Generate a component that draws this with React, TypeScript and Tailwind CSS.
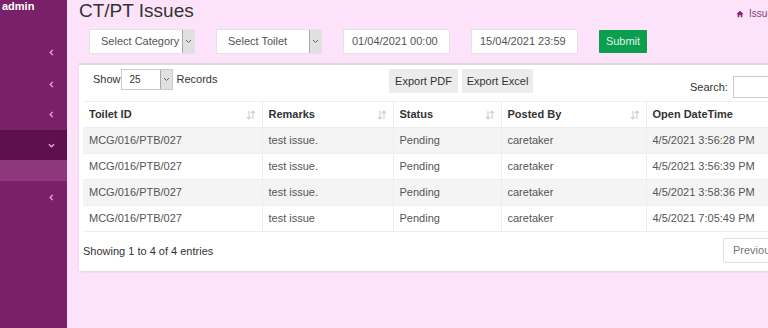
import React from "react";

const F = { fontFamily: '"Liberation Sans", Arial, sans-serif' };

function Chevron({ down = false }: { down?: boolean }) {
  return (
    <svg width="7" height="7" viewBox="0 0 8 8" className="text-[#e8a0dc]">
      {down ? (
        <path d="M1 2.5 L4 5.5 L7 2.5" stroke="currentColor" strokeWidth="1.6" fill="none" />
      ) : (
        <path d="M5.5 1 L2.5 4 L5.5 7" stroke="currentColor" strokeWidth="1.6" fill="none" />
      )}
    </svg>
  );
}

function SortIcon() {
  return (
    <svg width="10" height="10" viewBox="0 0 10 10" className="text-[#d0d0d0]">
      <path d="M3 1 V9 M1 7 L3 9 L5 7" stroke="currentColor" strokeWidth="1.2" fill="none" />
      <path d="M7 9 V1 M5 3 L7 1 L9 3" stroke="currentColor" strokeWidth="1.2" fill="none" />
    </svg>
  );
}

function SelectBox({ label, w }: { label: string; w: string }) {
  return (
    <div className={`flex h-[25px] ${w} bg-white border border-[#e3e3e3]`}>
      <div className="flex-1 flex items-center pl-[11px] text-[11px] text-[#555] whitespace-nowrap">{label}</div>
      <div className="w-[12px] bg-[#e0e0e0] border-l border-[#aaa] flex items-center justify-center">
        <svg width="7" height="5" viewBox="0 0 7 5"><path d="M1 1 L3.5 3.5 L6 1" stroke="#666" strokeWidth="1" fill="none" /></svg>
      </div>
    </div>
  );
}

const rows = [
  ["MCG/016/PTB/027", "test issue.", "Pending", "caretaker", "4/5/2021 3:56:28 PM"],
  ["MCG/016/PTB/027", "test issue.", "Pending", "caretaker", "4/5/2021 3:56:39 PM"],
  ["MCG/016/PTB/027", "test issue.", "Pending", "caretaker", "4/5/2021 3:58:36 PM"],
  ["MCG/016/PTB/027", "test issue", "Pending", "caretaker", "4/5/2021 7:05:49 PM"],
];

const cols = ["w-[179px]", "w-[131px]", "w-[108px]", "w-[145px]", "w-[140px]"];
const heads = ["Toilet ID", "Remarks", "Status", "Posted By", "Open DateTime"];

export default function App() {
  return (
    <div style={F} className="flex w-[768px] h-[328px] overflow-hidden bg-[#fce3f9]">
      <aside className="w-[67px] shrink-0 bg-[#7a2068] flex flex-col">
        <div className="h-[14px] pl-[2px] text-white font-bold text-[11px] leading-[12px]">admin</div>
        <div className="h-[30px]" />
        <div className="h-[16px] flex items-center justify-end pr-[12px]"><Chevron /></div>
        <div className="h-[16px]" />
        <div className="h-[16px] flex items-center justify-end pr-[12px]"><Chevron /></div>
        <div className="h-[14px]" />
        <div className="h-[16px] flex items-center justify-end pr-[12px]"><Chevron /></div>
        <div className="h-[8px]" />
        <div className="h-[30px] bg-[#5d0f4e] flex items-center justify-end pr-[12px]"><Chevron down /></div>
        <div className="h-[21px] bg-[#8d387d]" />
        <div className="h-[8px]" />
        <div className="h-[16px] flex items-center justify-end pr-[12px]"><Chevron /></div>
      </aside>
      <main className="flex-1 min-w-0 pl-[12px] flex flex-col">
        <div className="flex items-start justify-between h-[29px]">
          <h1 className="text-[19px] leading-[22px] text-[#333] pt-0">CT/PT Issues</h1>
          <div className="flex items-center gap-[5px] pt-[6px] text-[10px] text-[#8a3a7a] -mr-[10px] whitespace-nowrap">
            <svg width="8" height="8" viewBox="0 0 10 10"><path d="M5 1 L0.5 5 H2 V9 H4 V6.5 H6 V9 H8 V5 H9.5 Z" fill="#8a2a75" /></svg>
            <span>Issues</span>
          </div>
        </div>
        <div className="flex items-center gap-[21px] pl-[10px] h-[25px]">
          <SelectBox label="Select Category" w="w-[106px]" />
          <SelectBox label="Select Toilet" w="w-[106px]" />
          <div className="h-[25px] w-[107px] bg-white border border-[#e3e3e3] flex items-center pl-[8px] text-[11px] text-[#555]">01/04/2021 00:00</div>
          <div className="h-[25px] w-[107px] bg-white border border-[#e3e3e3] flex items-center pl-[8px] text-[11px] text-[#555]">15/04/2021 23:59</div>
          <div className="h-[23px] w-[48px] bg-[#0b9e4e] text-[#dff5e6] text-[11px] flex items-center justify-center rounded-[1px]">Submit</div>
        </div>
        <div className="mt-[9px] w-[720px] h-[208px] bg-white border-t-2 border-[#e0d8df] shadow-[0_1px_2px_rgba(0,0,0,0.1)] px-[4px]">
          <div className="relative h-[36px]">
            <div className="absolute left-[10px] top-[4px] flex items-center text-[11px] text-[#333]">
              <span>Show</span>
              <div className="ml-[0px] w-[52px] h-[21px] border border-[#ccc] flex">
                <div className="flex-1 flex items-center pl-[8px] text-[10px] text-[#333]">25</div>
                <div className="w-[12px] bg-[#e0e0e0] border-l border-[#aaa] flex items-center justify-center">
                  <svg width="7" height="5" viewBox="0 0 7 5"><path d="M1 1 L3.5 3.5 L6 1" stroke="#666" strokeWidth="1" fill="none" /></svg>
                </div>
              </div>
              <span className="ml-[4px]">Records</span>
            </div>
            <div className="absolute left-[306px] top-[4px] flex gap-[4px]">
              <div className="h-[24px] w-[69px] bg-[#ececec] text-[11px] text-[#333] flex items-center justify-center">Export PDF</div>
              <div className="h-[24px] w-[71px] bg-[#ececec] text-[11px] text-[#333] flex items-center justify-center">Export Excel</div>
            </div>
            <div className="absolute left-[607px] top-[11px] flex items-center gap-[5px] text-[11px] text-[#333]">
              <span>Search:</span>
              <div className="w-[60px] h-[22px] border border-[#ccc] bg-white" />
            </div>
          </div>
          <table className="border-collapse text-[11px]">
            <thead>
              <tr className="h-[26px] border-y border-[#eee]">
                {heads.map((h, i) => (
                  <th key={h} className={`${cols[i]} text-left font-bold text-[#333] pl-[6px] pr-[6px] border-r border-[#eee]`}>
                    <div className="flex items-center justify-between">
                      <span>{h}</span>
                      {i < 4 && <SortIcon />}
                    </div>
                  </th>
                ))}
              </tr>
            </thead>
            <tbody>
              {rows.map((r, ri) => (
                <tr key={ri} className={`h-[26px] ${ri % 2 === 0 ? "bg-[#f4f4f4]" : "bg-white"} border-b border-[#eee]`}>
                  {r.map((c, ci) => (
                    <td key={ci} className={`${cols[ci]} pl-[6px] text-[#555] border-r border-[#eee]`}>{c}</td>
                  ))}
                </tr>
              ))}
            </tbody>
          </table>
          <div className="relative h-[38px]">
            <div className="absolute left-0 top-[11px] text-[11px] text-[#333]">Showing 1 to 4 of 4 entries</div>
            <div className="absolute left-[640px] top-[6px] h-[25px] w-[70px] border border-[#ddd] rounded-[2px] flex items-center pl-[9px] text-[11px] text-[#777]">Previous</div>
          </div>
        </div>
      </main>
    </div>
  );
}
